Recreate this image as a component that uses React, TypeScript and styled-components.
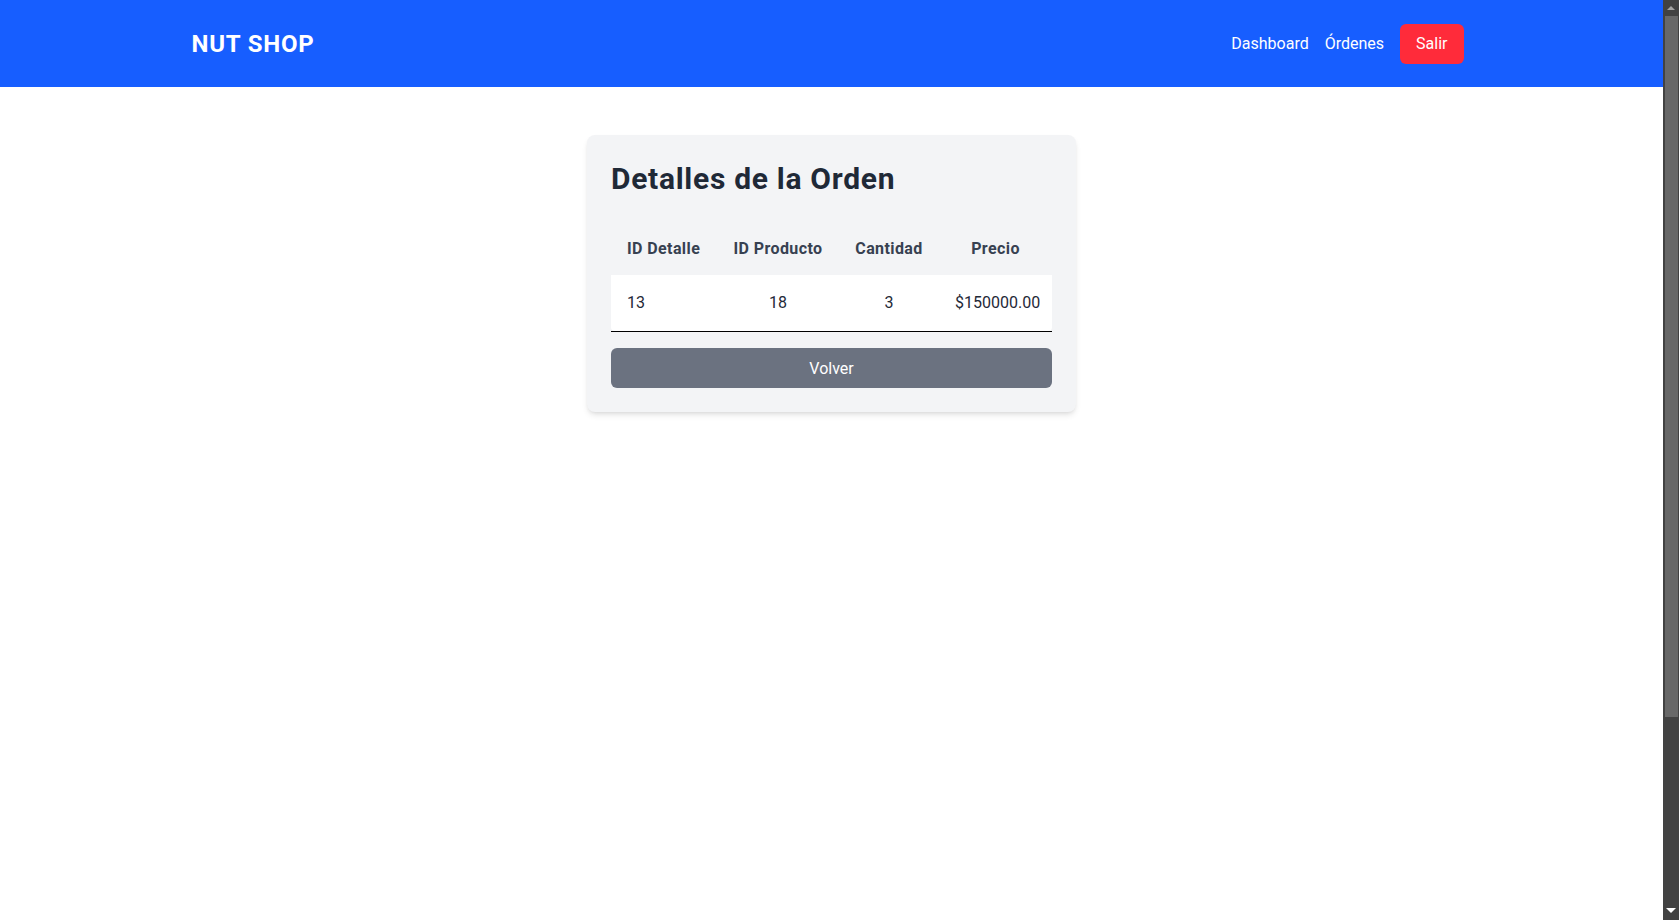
import React from 'react';
import styled, { createGlobalStyle } from 'styled-components';

const GlobalStyle = createGlobalStyle`
  html, body {
    margin: 0;
    padding: 0;
  }
  html {
    scrollbar-width: none;
  }
  html::-webkit-scrollbar {
    display: none;
  }
  body {
    background: #ffffff;
    font-family: 'Segoe UI', Roboto, 'Open Sans', Arial, sans-serif;
    color: #1f2937;
  }
  * {
    box-sizing: border-box;
  }
`;

const details = [{ id: 13, productId: 18, quantity: 3, price: 150000 }];

export default function App() {
  return (
    <>
      <GlobalStyle />
      <Page>
        <Header>
          <HeaderInner>
            <Logo>NUT SHOP</Logo>
            <Nav>
              <NavLink href="#">Dashboard</NavLink>
              <NavLink href="#">Órdenes</NavLink>
              <LogoutButton>Salir</LogoutButton>
            </Nav>
          </HeaderInner>
        </Header>

        <Main>
          <Card>
            <Title>Detalles de la Orden</Title>
            <TableWrap>
              <Table>
                <colgroup>
                  <col style={{ width: 106 }} />
                  <col style={{ width: 122 }} />
                  <col style={{ width: 100 }} />
                  <col style={{ width: 113 }} />
                </colgroup>
                <thead>
                  <tr>
                    <Th $align="left">ID Detalle</Th>
                    <Th>ID Producto</Th>
                    <Th>Cantidad</Th>
                    <Th>Precio</Th>
                  </tr>
                </thead>
                <tbody>
                  {details.map((d) => (
                    <tr key={d.id}>
                      <Td $align="left">{d.id}</Td>
                      <Td>{d.productId}</Td>
                      <Td>{d.quantity}</Td>
                      <Td>${d.price.toFixed(2)}</Td>
                    </tr>
                  ))}
                </tbody>
              </Table>
            </TableWrap>
            <BackButton>Volver</BackButton>
          </Card>
        </Main>
      </Page>

      {/* window scrollbar as seen in the screenshot */}
      <ScrollTrack>
        <ArrowUp />
        <Thumb />
        <ArrowDown />
      </ScrollTrack>
    </>
  );
}

const Page = styled.div`
  padding-right: 16px;
`;

const Header = styled.header`
  background-color: #175eff;
  height: 87px;
  display: flex;
  align-items: center;
`;

const HeaderInner = styled.div`
  width: 100%;
  max-width: 1280px;
  margin: 0 auto;
  padding-right: 8px;
  display: flex;
  align-items: center;
  justify-content: space-between;
`;

const Logo = styled.h1`
  margin: 0;
  color: #ffffff;
  font-size: 24px;
  font-weight: 700;
  line-height: 32px;
  letter-spacing: 0.8px;
`;

const Nav = styled.nav`
  display: flex;
  align-items: center;
  gap: 16px;
`;

const NavLink = styled.a`
  color: #ffffff;
  text-decoration: none;
  font-size: 16px;
  line-height: 24px;
`;

const LogoutButton = styled.button`
  background-color: #ff2b3a;
  color: #ffffff;
  border: none;
  border-radius: 6px;
  padding: 8px 16px;
  font-family: inherit;
  font-size: 16px;
  line-height: 24px;
  cursor: pointer;
`;

const Main = styled.main`
  box-sizing: content-box;
  min-height: 100vh;
  padding: 48px 0 108px;
  display: flex;
  justify-content: center;
  align-items: flex-start;
`;

const Card = styled.div`
  background-color: #f3f4f6;
  border-radius: 8px;
  padding: 24px;
  box-shadow: 0 4px 6px -1px rgba(0, 0, 0, 0.1), 0 2px 4px -2px rgba(0, 0, 0, 0.1);
  width: fit-content;
`;

const Title = styled.h2`
  margin: 0 0 28px;
  font-size: 30px;
  line-height: 40px;
  font-weight: 700;
  letter-spacing: 0.7px;
  color: #1f2937;
`;

const TableWrap = styled.div`
  border-bottom: 1px solid #000000;
`;

const Table = styled.table`
  width: 441px;
  table-layout: fixed;
  border-collapse: separate;
  border-spacing: 0;
`;

const Th = styled.th<{ $align?: 'left' | 'center' }>`
  padding: 10px 16px 14px;
  font-size: 16px;
  line-height: 24px;
  font-weight: 700;
  letter-spacing: 0.4px;
  color: #374151;
  text-align: ${(p) => p.$align ?? 'center'};
  white-space: nowrap;
`;

const Td = styled.td<{ $align?: 'left' | 'center' }>`
  background-color: #ffffff;
  padding: 16px;
  font-size: 16px;
  line-height: 24px;
  color: #1f2937;
  text-align: ${(p) => p.$align ?? 'center'};
  white-space: nowrap;

  &:first-child {
    border-bottom-left-radius: 4px;
  }
  &:last-child {
    border-bottom-right-radius: 4px;
  }
`;

const BackButton = styled.button`
  display: block;
  width: 100%;
  margin-top: 16px;
  height: 40px;
  background-color: #6b7280;
  color: #ffffff;
  border: none;
  border-radius: 6px;
  font-family: inherit;
  font-size: 16px;
  cursor: pointer;
`;

const ScrollTrack = styled.div`
  position: fixed;
  top: 0;
  right: 0;
  bottom: 0;
  width: 16px;
  background-color: #424242;
`;

const Thumb = styled.div`
  position: absolute;
  top: 16px;
  left: 2px;
  right: 1px;
  height: 701px;
  background-color: #686868;
`;

const ArrowUp = styled.div`
  position: absolute;
  top: 6px;
  left: 4px;
  width: 0;
  height: 0;
  border-left: 4px solid transparent;
  border-right: 4px solid transparent;
  border-bottom: 4px solid #a3a3a3;
`;

const ArrowDown = styled.div`
  position: absolute;
  bottom: 7px;
  left: 3px;
  width: 0;
  height: 0;
  border-left: 5px solid transparent;
  border-right: 5px solid transparent;
  border-top: 5px solid #ffffff;
`;
